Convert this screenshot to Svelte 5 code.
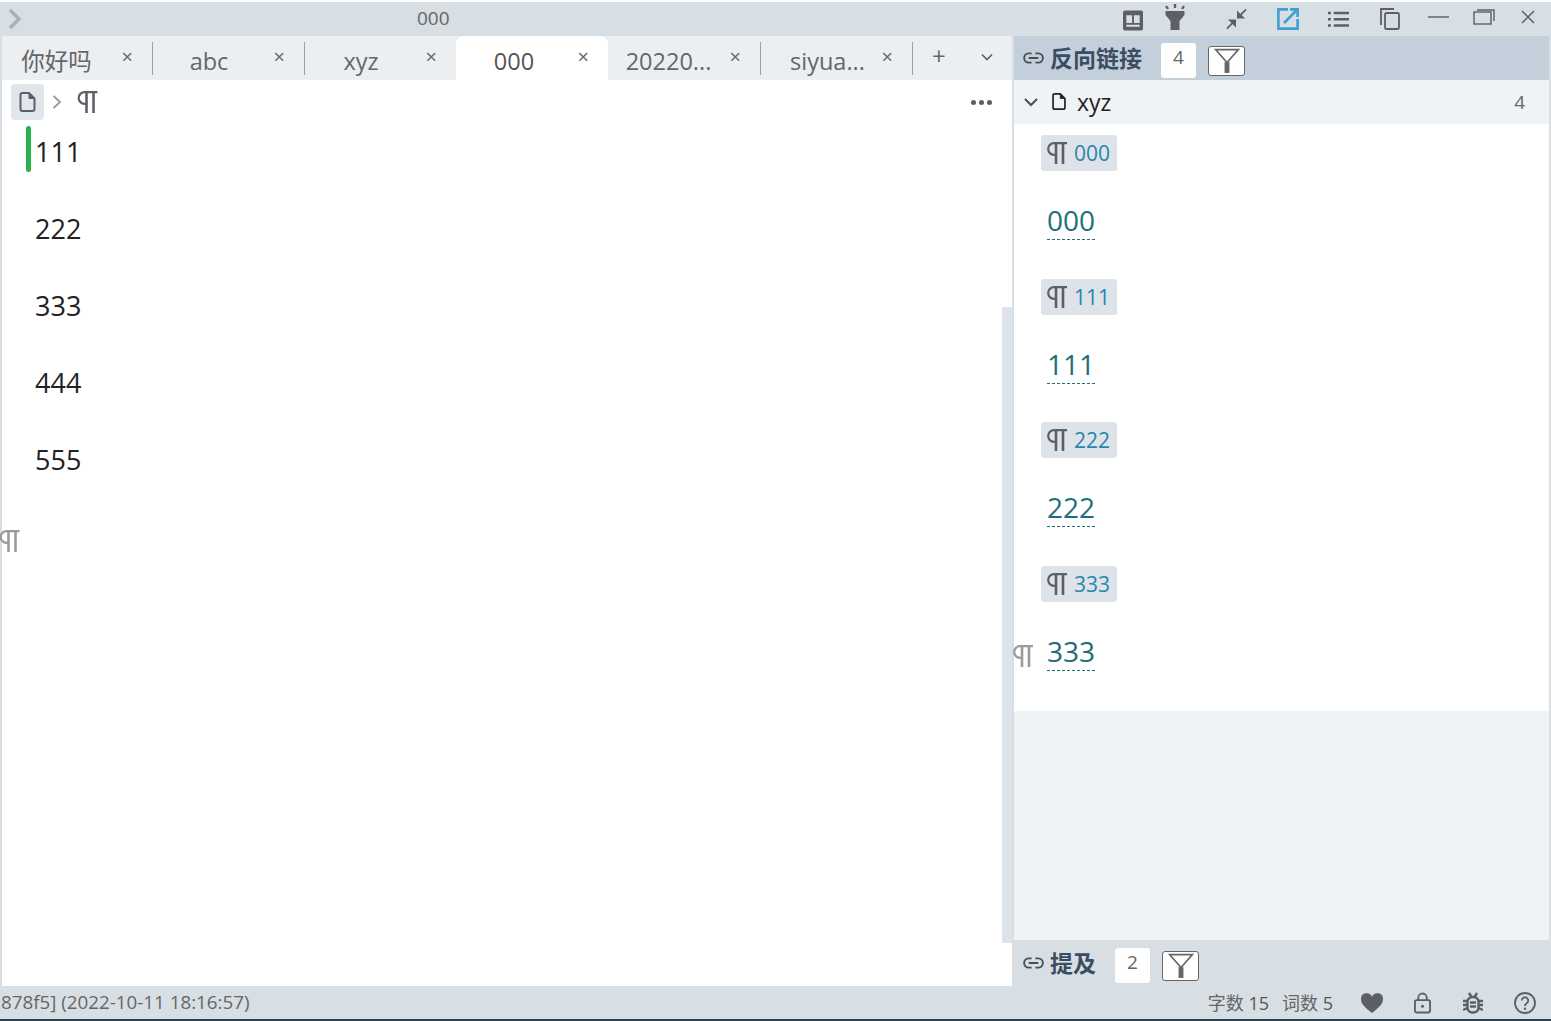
<script>
	const tabs = [
		{ title: '你好吗' },
		{ title: 'abc' },
		{ title: 'xyz' },
		{ title: '000', active: true },
		{ title: '20220...' },
		{ title: 'siyua...' }
	];
	const lines = ['111', '222', '333', '444', '555'];
	const refs = ['000', '111', '222', '333'];
</script>

{#snippet pilcrow(cls)}
	<svg class={cls} viewBox="0 0 20 22" fill="none" stroke="currentColor">
		<path d="M20 1.2H7a5.8 5.8 0 0 0 0 11.6H9" stroke-width="2.2" />
		<path d="M9 1v21M16 1v21" stroke-width="2.6" />
	</svg>
{/snippet}

{#snippet fileIcon(cls)}
	<svg class={cls} viewBox="0 0 16 20" fill="none" stroke="currentColor" stroke-width="2" stroke-linejoin="round">
		<path d="M3 1h6.5L15 6.5V17a2 2 0 0 1-2 2H3a2 2 0 0 1-2-2V3a2 2 0 0 1 2-2z" />
		<path d="M9.5 1v5.5H15" fill="currentColor" stroke-width="1" />
	</svg>
{/snippet}

{#snippet linkIcon()}
	<svg class="link-icon" viewBox="0 0 22 12" fill="none" stroke="currentColor" stroke-width="2">
		<path d="M9 1.2H6a4.8 4.8 0 0 0 0 9.6h3M13 1.2h3a4.8 4.8 0 0 1 0 9.6h-3M6 6h10" />
	</svg>
{/snippet}

{#snippet filterBtn()}
	<span class="filter">
		<svg viewBox="0 0 24 24" fill="none" stroke="#666" stroke-width="1.500">
			<path d="M1.500 1.500h21L12 13.500z" />
			<path d="M12 13v10" stroke-width="4.500" />
		</svg>
	</span>
{/snippet}

<div class="app">
	<header class="titlebar">
		<svg class="menu-arrow" viewBox="0 0 14 22" fill="none" stroke="#a9b1b7" stroke-width="3.4">
			<path d="M2 2l9 9-9 9" />
		</svg>
		<span class="doc-title">000</span>
		<div class="title-icons">
			<svg class="ti book" viewBox="0 0 21 21" fill="#5c6066">
				<path fill-rule="evenodd" d="M2 0h17a2 2 0 0 1 2 2v17a2 2 0 0 1-2 2H2a2 2 0 0 1-2-2V2a2 2 0 0 1 2-2zM3.500 5v8h6V5zM11.500 5v8h6V5zM3.500 15v2h14v-2z" />
			</svg>
			<svg class="ti torch" viewBox="0 0 22 26" fill="#5c6066">
				<path d="M1.500 7h19v4l-5 6v9h-9v-9l-5-6z" />
				<path d="M9.800 0h2.400v4H9.800zM1 2.500l2-1 2 3-2 1zM21 2.500l-2-1-2 3 2 1z" />
			</svg>
			<svg class="ti pin" viewBox="0 0 22 22" fill="none" stroke="#5c6066" stroke-width="1.800">
				<path d="M21 1l-8 8M1 21l8-8" />
				<path d="M11.500 2v8.500H20zM2 11.500h8.500V20z" fill="#5c6066" stroke="none" />
			</svg>
			<svg class="ti ext" viewBox="0 0 22 22" fill="none" stroke="#3fa0cf" stroke-width="2.600">
				<path d="M11 1.400H1.400v19.200H20.600V11" />
				<path d="M7 15L20 2M13 1.400h7.600V9" />
			</svg>
			<svg class="ti list" viewBox="0 0 22 18" fill="#5c6066">
				<path d="M0 1.500h3v2.600H0zM6 1.500h16v2.600H6zM0 8h3v2.600H0zM6 8h16v2.600H6zM0 14.500h3v2.600H0zM6 14.500h16v2.600H6z" />
			</svg>
			<svg class="ti copy" viewBox="0 0 20 22" fill="none" stroke="#5c6066" stroke-width="1.800">
				<path d="M1 17V1h13" />
				<rect x="5" y="5" width="14" height="16" rx="1.500" />
			</svg>
			<svg class="ti min" viewBox="0 0 22 2"><path d="M0 1h22" stroke="#5c6066" stroke-width="1.500" /></svg>
			<svg class="ti max" viewBox="0 0 22 16" fill="none" stroke="#5c6066" stroke-width="1.400">
				<path d="M4 1h17v11" />
				<rect x="1" y="3" width="17" height="12" />
			</svg>
			<svg class="ti win-close" viewBox="0 0 14 14" fill="none" stroke="#5c6066" stroke-width="1.500">
				<path d="M1 1l12 12M13 1L1 13" />
			</svg>
		</div>
	</header>

	<div class="main">
		<section class="editor-col">
			<nav class="tabs">
				{#each tabs as tab}
					<div class={tab.active ? 'tab active' : 'tab'}>
						<span class="tab-title">{tab.title}</span>
						<span class="tab-close">×</span>
					</div>
				{/each}
				<span class="tab-add">+</span>
				<svg class="tab-more" viewBox="0 0 12 8" fill="none" stroke="#5c6066" stroke-width="1.600">
					<path d="M1 1.500l5 5 5-5" />
				</svg>
			</nav>

			<div class="editor">
				<div class="crumbs">
					<span class="crumb-file">{@render fileIcon('crumb-file-icon')}</span>
					<svg class="crumb-arrow" viewBox="0 0 10 16" fill="none" stroke="#999" stroke-width="1.800">
						<path d="M1.500 2l6.500 6-6.500 6" />
					</svg>
					{@render pilcrow('crumb-para')}
					<span class="crumb-dots"><i></i><i></i><i></i></span>
				</div>

				<div class="doc">
					{#each lines as line}
						<p>{line}</p>
					{/each}
				</div>

				<span class="green-bar"></span>
				{@render pilcrow('gutter-para')}
				<span class="scrollbar"></span>
			</div>
		</section>

		<aside class="side">
			<div class="panel-head backlinks">
				{@render linkIcon()}
				<strong>反向链接</strong>
				<span class="count">4</span>
				{@render filterBtn()}
			</div>
			<div class="doc-row">
				<svg class="row-arrow" viewBox="0 0 14 9" fill="none" stroke="#4a4f55" stroke-width="2">
					<path d="M1 1l6 6 6-6" />
				</svg>
				{@render fileIcon('row-file')}
				<span class="row-name">xyz</span>
				<span class="row-count">4</span>
			</div>
			<div class="refs">
				{#each refs as r}
					<div class="ref">
						<span class="chip">{@render pilcrow('chip-para')}<span>{r}</span></span>
						<a class="ref-link" href="#top">{r}</a>
					</div>
				{/each}
				{@render pilcrow('side-para')}
			</div>
			<div class="side-empty"></div>
			<div class="panel-head mentions">
				{@render linkIcon()}
				<strong>提及</strong>
				<span class="count">2</span>
				{@render filterBtn()}
			</div>
		</aside>
	</div>

	<footer class="status">
		<span class="status-msg">878f5] (2022-10-11 18:16:57)</span>
		<span class="stat">字数 <b>15</b></span>
		<span class="stat second">词数 <b>5</b></span>
		<svg class="si heart" viewBox="0 0 22 20" fill="#5c6066">
			<path d="M11 20C4 14.500 0 11 0 6a5.700 5.700 0 0 1 11-2.200A5.700 5.700 0 0 1 22 6c0 5-4 8.500-11 14z" />
		</svg>
		<svg class="si lock" viewBox="0 0 18 22" fill="none" stroke="#5c6066" stroke-width="2">
			<rect x="1" y="8" width="16" height="13" rx="2" />
			<path d="M4.500 8V5.500a4.500 4.500 0 0 1 9 0V8" />
			<circle cx="9" cy="14.500" r="1.600" fill="#5c6066" stroke="none" />
		</svg>
		<svg class="si bug" viewBox="0 0 20 22" fill="none" stroke="#5c6066" stroke-width="2.400">
			<rect x="4.500" y="5" width="11" height="15.500" rx="5" />
			<path d="M6 1l2.500 4M14 1l-2.500 4M0 9h4.500M15.500 9H20M0 13h4.500M15.500 13H20M0 18l4.500-2M20 18l-4.500-2M7 10.500h6M7 14.500h6" />
		</svg>
		<svg class="si help" viewBox="0 0 22 22" fill="none" stroke="#5c6066" stroke-width="1.800">
			<circle cx="11" cy="11" r="10" />
			<path d="M7.800 8.500a3.200 3.200 0 1 1 5 2.600c-1.200.9-1.800 1.400-1.800 2.900" />
			<circle cx="11" cy="16.800" r="1.200" fill="#5c6066" stroke="none" />
		</svg>
	</footer>
</div>

<style>
	:global(body) {
		margin: 0;
		background: #fff;
	}

	.app {
		width: 1551px;
		height: 1021px;
		display: flex;
		flex-direction: column;
		padding-top: 2px;
		box-sizing: border-box;
		overflow: hidden;
		font-family: 'Open Sans', 'Noto Sans CJK SC', sans-serif;
		color: #222;
	}

	/* title bar */
	.titlebar {
		height: 34px;
		flex: none;
		background: #d7dee4;
		display: flex;
		align-items: center;
		padding-left: 8px;
		position: relative;
	}

	.menu-arrow {
		width: 14px;
		height: 22px;
	}

	.doc-title {
		margin-left: 395px;
		margin-top: -2px;
		font-size: 19px;
		color: #666;
	}

	.title-icons {
		margin-left: auto;
		display: flex;
		align-items: center;
		padding-right: 16px;
	}

	.ti {
		display: block;
		flex: none;
	}

	.book {
		width: 20px;
		height: 21px;
		margin-top: 2px;
	}

	.torch {
		width: 22px;
		height: 26px;
		margin-left: 21px;
		margin-top: -5px;
	}

	.pin {
		width: 21px;
		height: 22px;
		margin-left: 40px;
	}

	.ext {
		width: 22px;
		height: 22px;
		margin-left: 30px;
	}

	.list {
		width: 21px;
		height: 18px;
		margin-left: 29px;
	}

	.copy {
		width: 20px;
		height: 22px;
		margin-left: 31px;
	}

	.min {
		width: 21px;
		height: 2px;
		margin-left: 28px;
		margin-top: -4px;
	}

	.max {
		width: 22px;
		height: 16px;
		margin-left: 24px;
		margin-top: -4px;
	}

	.win-close {
		width: 14px;
		height: 14px;
		margin-left: 26px;
		margin-top: -4px;
	}

	/* main area */
	.main {
		flex: 1;
		display: flex;
		min-height: 0;
		background: #d7dee4;
		padding-left: 2px;
	}

	.editor-col {
		width: 1010px;
		flex: none;
		display: flex;
		flex-direction: column;
		background: #fff;
	}

	.tabs {
		height: 44px;
		flex: none;
		background: #eceff2;
		display: flex;
		position: relative;
	}

	.tab {
		width: 152px;
		flex: none;
		box-sizing: border-box;
		position: relative;
		display: flex;
		justify-content: center;
		padding: 8px 38px 0 0;
		font-size: 23.500px;
		line-height: 34px;
		white-space: nowrap;
		color: #666;
	}

	.tab:nth-child(1) {
		width: 150px;
		padding-right: 41px;
	}

	.tab:nth-child(4) {
		padding-right: 36px;
	}

	.tab:nth-child(5) {
		padding-right: 31px;
	}

	.tab:nth-child(6) {
		padding-right: 17px;
	}

	.tab::after {
		content: '';
		position: absolute;
		right: -1px;
		top: 6px;
		height: 33px;
		width: 1.500px;
		background: #9aa0a5;
	}

	.tab.active {
		background: #fff;
		border-radius: 8px 8px 0 0;
		color: #555;
	}

	.tab.active::after,
	.tab:nth-child(3)::after,
	.tab:nth-child(4)::after {
		display: none;
	}

	.tab-close {
		position: absolute;
		right: 19px;
		top: 6px;
		font-size: 20px;
		line-height: 30px;
		color: #666;
	}

	.tab-add {
		margin-left: 20px;
		font-size: 24px;
		line-height: 40px;
		color: #666;
	}

	.tab-more {
		width: 12px;
		height: 8px;
		margin: 17px 0 0 35px;
	}

	.editor {
		flex: 1;
		position: relative;
		min-height: 0;
	}

	.crumbs {
		display: flex;
		align-items: center;
		height: 36px;
		padding: 4px 20px 0 9px;
		position: relative;
	}

	.crumb-file {
		width: 33px;
		height: 36px;
		background: #e0e6eb;
		border-radius: 4px;
		display: flex;
		align-items: center;
		justify-content: center;
		color: #5c6066;
	}

	:global(.crumb-file-icon) {
		width: 17px;
		height: 20px;
	}

	.crumb-arrow {
		width: 10px;
		height: 16px;
		margin-left: 8px;
	}

	:global(.crumb-para) {
		width: 21px;
		height: 22px;
		margin-left: 15px;
		color: #5c6066;
	}

	.crumb-dots {
		margin-left: auto;
		display: flex;
		gap: 3px;
	}

	.crumb-dots i {
		width: 5px;
		height: 5px;
		border-radius: 50%;
		background: #5c6066;
	}

	.doc {
		padding: 0 0 0 33px;
	}

	.doc p {
		margin: 0;
		height: 77px;
		font-size: 27px;
		line-height: 63px;
		color: #222;
	}

	.green-bar {
		position: absolute;
		left: 24px;
		top: 46px;
		width: 5px;
		height: 46px;
		border-radius: 3px;
		background: #2bb04f;
	}

	:global(.gutter-para) {
		position: absolute;
		left: -3px;
		top: 450px;
		width: 21px;
		height: 22px;
		color: #9b9b9b;
	}

	.scrollbar {
		position: absolute;
		right: 0;
		top: 227px;
		width: 10px;
		height: 636px;
		background: #dde3e8;
	}

	/* side panel */
	.side {
		margin-left: 2px;
		flex: 1;
		display: flex;
		flex-direction: column;
		margin-right: 2px;
		background: #eff3f6;
	}

	.panel-head {
		display: flex;
		align-items: center;
		flex: none;
		height: 44px;
		padding-left: 9px;
		color: #3b4d63;
	}

	.panel-head strong {
		font-size: 23px;
		margin-left: 6px;
		line-height: 34px;
		font-weight: 700;
	}

	.backlinks {
		background: #c3d0db;
	}

	.mentions {
		height: 46px;
		background: #d7dee4;
		margin-right: -2px;
	}

	:global(.link-icon) {
		width: 21px;
		height: 12px;
		color: #4a4f55;
	}

	.count {
		width: 35px;
		height: 35px;
		margin: 4px 0 0 19px;
		background: #fff;
		border-radius: 3px;
		font-size: 19px;
		font-weight: 400;
		line-height: 29px;
		text-align: center;
		color: #666;
	}

	.filter {
		width: 37px;
		height: 30px;
		margin: 5px 0 0 12px;
		box-sizing: border-box;
		background: #fff;
		border: 1.500px solid #666;
		border-radius: 3px;
		display: flex;
		align-items: center;
		justify-content: center;
	}

	.filter svg {
		width: 26px;
		height: 26px;
	}

	.doc-row {
		height: 44px;
		flex: none;
		display: flex;
		align-items: center;
		padding-left: 10px;
		padding-right: 24px;
	}

	.row-arrow {
		width: 14px;
		height: 9px;
	}

	:global(.row-file) {
		width: 14px;
		height: 17px;
		margin-left: 14px;
		margin-top: -2px;
		color: #222;
	}

	.row-name {
		margin-left: 11px;
		font-size: 23px;
		line-height: 30px;
		color: #222;
	}

	.row-count {
		margin-left: auto;
		font-size: 19px;
		color: #666;
	}

	.refs {
		background: #fff;
		height: 587px;
		flex: none;
		box-sizing: border-box;
		padding: 11px 0 0 27px;
		position: relative;
	}

	.ref {
		height: 143.670px;
		display: flex;
		flex-direction: column;
		align-items: flex-start;
	}

	.chip {
		height: 36px;
		width: 76px;
		box-sizing: border-box;
		background: #dde3e9;
		border-radius: 3px;
		display: flex;
		align-items: center;
		padding-left: 6px;
		font-size: 21px;
		color: #2a86aa;
	}

	:global(.chip-para) {
		width: 20px;
		height: 22px;
		margin-right: 7px;
		color: #5c6066;
	}

	.ref-link {
		margin: 30px 0 0 6px;
		font-size: 28px;
		line-height: 38px;
		color: #1f6f78;
		text-decoration: none;
		border-bottom: 1px dashed #1f6f78;
	}

	:global(.side-para) {
		position: absolute;
		left: -1px;
		top: 521px;
		width: 20px;
		height: 22px;
		color: #9b9b9b;
	}

	.side-empty {
		flex: 1;
		background: #eff3f6;
	}

	/* status bar */
	.status {
		height: 35px;
		flex: none;
		box-sizing: border-box;
		background: #d7dee4;
		border-bottom: 2px solid #2c3e4a;
		padding: 0 0 2px 1px;
		display: flex;
		align-items: center;
		font-size: 18px;
		color: #666;
	}

	.status-msg {
		font-size: 18.800px;
		margin-right: auto;
	}

	.stat b {
		font-weight: 400;
		color: #555;
	}

	.second {
		margin-left: 13px;
	}

	.si {
		flex: none;
		display: block;
		margin-top: 2px;
	}

	.heart {
		width: 22px;
		height: 20px;
		margin-left: 28px;
	}

	.lock {
		width: 17px;
		height: 22px;
		margin-left: 31px;
	}

	.bug {
		width: 20px;
		height: 22px;
		margin-left: 32px;
	}

	.help {
		width: 22px;
		height: 22px;
		margin-left: 31px;
		margin-right: 15px;
	}
</style>
